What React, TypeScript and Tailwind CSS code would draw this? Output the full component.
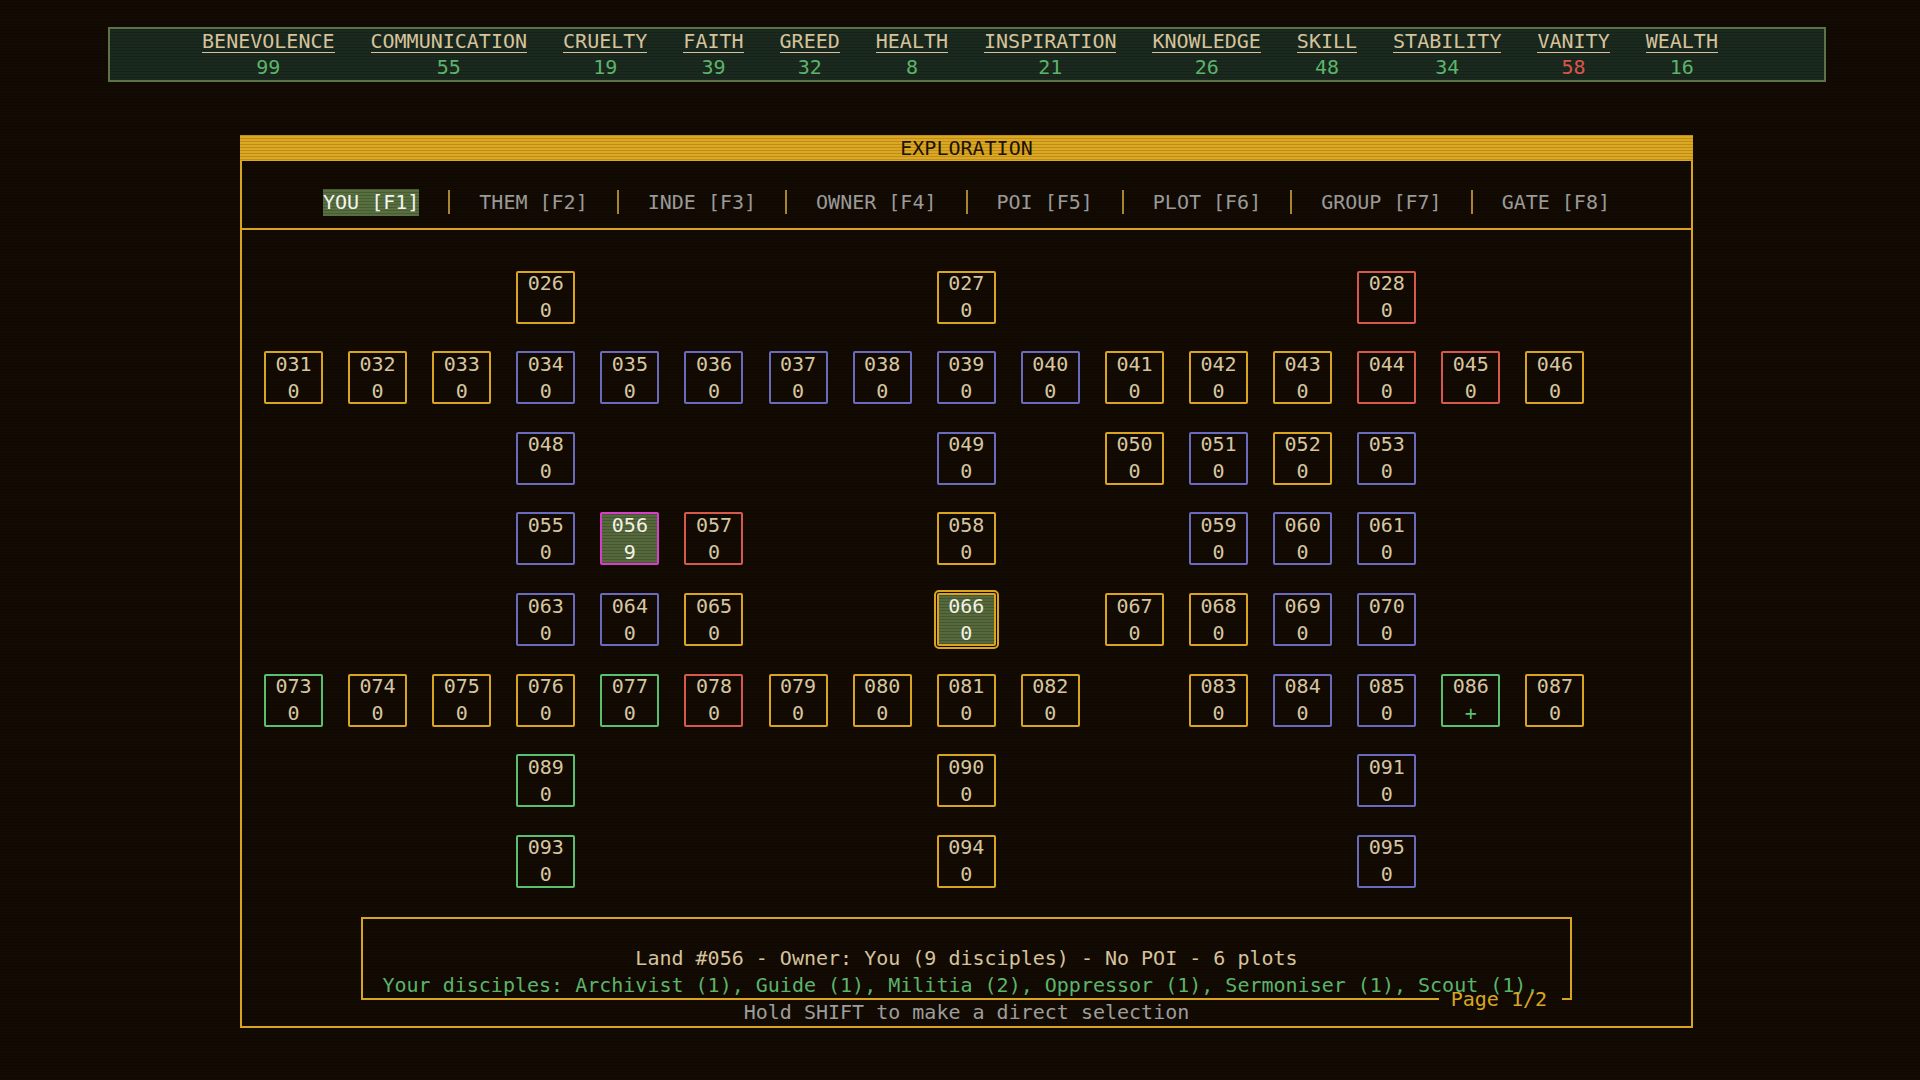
import React from 'react';

type Tone = 'y' | 'b' | 'r' | 'g' | 'm';

type Tile = {
  id: string;
  tone: Tone;
  value?: string;
  filled?: boolean;
  focus?: boolean;
};

const MONO = "font-['DejaVu_Sans_Mono','Liberation_Mono',monospace]";
const SCAN =
  'bg-[repeating-linear-gradient(to_bottom,rgba(0,0,0,0.18)_0px,rgba(0,0,0,0.18)_1px,transparent_1px,transparent_3px)]';

const stats: { name: string; value: number; low?: boolean }[] = [
  { name: 'BENEVOLENCE', value: 99 },
  { name: 'COMMUNICATION', value: 55 },
  { name: 'CRUELTY', value: 19 },
  { name: 'FAITH', value: 39 },
  { name: 'GREED', value: 32 },
  { name: 'HEALTH', value: 8 },
  { name: 'INSPIRATION', value: 21 },
  { name: 'KNOWLEDGE', value: 26 },
  { name: 'SKILL', value: 48 },
  { name: 'STABILITY', value: 34 },
  { name: 'VANITY', value: 58, low: true },
  { name: 'WEALTH', value: 16 },
];

const tabs = ['YOU [F1]', 'THEM [F2]', 'INDE [F3]', 'OWNER [F4]', 'POI [F5]', 'PLOT [F6]', 'GROUP [F7]', 'GATE [F8]'];

const toneBorder: Record<Tone, string> = {
  y: 'border-[#d9a521]',
  b: 'border-[#6b6bbd]',
  r: 'border-[#d65a4c]',
  g: 'border-[#5cbf6e]',
  m: 'border-[#d63fc9]',
};

// 17 columns per row, the map is centred on land 066
const COLS = 17;
const map: Record<number, Tile>[] = [
  { 3: { id: '026', tone: 'y' }, 8: { id: '027', tone: 'y' }, 13: { id: '028', tone: 'r' } },
  {
    0: { id: '031', tone: 'y' },
    1: { id: '032', tone: 'y' },
    2: { id: '033', tone: 'y' },
    3: { id: '034', tone: 'b' },
    4: { id: '035', tone: 'b' },
    5: { id: '036', tone: 'b' },
    6: { id: '037', tone: 'b' },
    7: { id: '038', tone: 'b' },
    8: { id: '039', tone: 'b' },
    9: { id: '040', tone: 'b' },
    10: { id: '041', tone: 'y' },
    11: { id: '042', tone: 'y' },
    12: { id: '043', tone: 'y' },
    13: { id: '044', tone: 'r' },
    14: { id: '045', tone: 'r' },
    15: { id: '046', tone: 'y' },
  },
  {
    3: { id: '048', tone: 'b' },
    8: { id: '049', tone: 'b' },
    10: { id: '050', tone: 'y' },
    11: { id: '051', tone: 'b' },
    12: { id: '052', tone: 'y' },
    13: { id: '053', tone: 'b' },
  },
  {
    3: { id: '055', tone: 'b' },
    4: { id: '056', tone: 'm', value: '9', filled: true },
    5: { id: '057', tone: 'r' },
    8: { id: '058', tone: 'y' },
    11: { id: '059', tone: 'b' },
    12: { id: '060', tone: 'b' },
    13: { id: '061', tone: 'b' },
  },
  {
    3: { id: '063', tone: 'b' },
    4: { id: '064', tone: 'b' },
    5: { id: '065', tone: 'y' },
    8: { id: '066', tone: 'y', filled: true, focus: true },
    10: { id: '067', tone: 'y' },
    11: { id: '068', tone: 'y' },
    12: { id: '069', tone: 'b' },
    13: { id: '070', tone: 'b' },
  },
  {
    0: { id: '073', tone: 'g' },
    1: { id: '074', tone: 'y' },
    2: { id: '075', tone: 'y' },
    3: { id: '076', tone: 'y' },
    4: { id: '077', tone: 'g' },
    5: { id: '078', tone: 'r' },
    6: { id: '079', tone: 'y' },
    7: { id: '080', tone: 'y' },
    8: { id: '081', tone: 'y' },
    9: { id: '082', tone: 'y' },
    11: { id: '083', tone: 'y' },
    12: { id: '084', tone: 'b' },
    13: { id: '085', tone: 'b' },
    14: { id: '086', tone: 'g', value: '+' },
    15: { id: '087', tone: 'y' },
  },
  { 3: { id: '089', tone: 'g' }, 8: { id: '090', tone: 'y' }, 13: { id: '091', tone: 'b' } },
  { 3: { id: '093', tone: 'g' }, 8: { id: '094', tone: 'y' }, 13: { id: '095', tone: 'b' } },
];

function LandTile({ tile }: { tile: Tile }) {
  const text = tile.filled ? 'text-[#f4f1e6]' : 'text-[#d6c6a0]';
  return (
    <div
      className={`flex h-[53px] w-[59px] flex-col items-center justify-center rounded-[2px] border-2 text-[20px] leading-[27px] ${toneBorder[tile.tone]} ${
        tile.filled ? `bg-[#55693c] ${SCAN}` : ''
      } ${tile.focus ? 'outline-2 outline-offset-[1px] outline-[#d9a521]' : ''}`}
    >
      <span className={text}>{tile.id}</span>
      <span className={tile.value === '+' ? 'text-[#5cbf6e]' : text}>{tile.value ?? '0'}</span>
    </div>
  );
}

export default function App() {
  return (
    <div
      className={`h-[1080px] w-full overflow-hidden bg-[#130b03] ${MONO} bg-[repeating-linear-gradient(to_bottom,rgba(0,0,0,0.22)_0px,rgba(0,0,0,0.22)_1px,transparent_1px,transparent_3px)]`}
    >
      {/* attribute bar */}
      <div
        className={`ml-[108px] mr-[94px] mt-[27px] h-[55px] border-2 border-[#5b7347] bg-[#1b2a1f] ${SCAN}`}
      >
        <div className="flex justify-center gap-[36px] pr-[14px] pt-[1px]">
          {stats.map((s) => (
            <div key={s.name} className="flex flex-col items-center">
              <span className="border-b border-[#d6c39c] text-[20px] leading-[22px] text-[#d6c39c]">{s.name}</span>
              <span
                className={`mt-[3px] text-[20px] leading-[22px] ${s.low ? 'text-[#d9564a]' : 'text-[#5cb46a]'}`}
              >
                {s.value}
              </span>
            </div>
          ))}
        </div>
      </div>

      {/* exploration window */}
      <div className="ml-[240px] mt-[53px] w-[1453px]">
        <div
          className={`flex h-[26px] items-center justify-center bg-[#dba823] text-[20px] leading-[26px] text-[#1c1206] bg-[repeating-linear-gradient(to_bottom,rgba(140,90,0,0.35)_0px,rgba(140,90,0,0.35)_1px,transparent_1px,transparent_3px)]`}
        >
          EXPLORATION
        </div>
        <div className="flex h-[867px] flex-col border-x-2 border-b-2 border-[#d9a521]">
          {/* filter tabs */}
          <div className="flex h-[69px] items-end justify-center border-b-2 border-[#d9a521] pb-[12px]">
            {tabs.map((t, i) => (
              <React.Fragment key={t}>
                {i > 0 && <span className="mx-[29px] mb-[2px] h-[24px] w-[2px] bg-[#a9852f]" />}
                <span
                  className={`text-[20px] leading-[27px] ${
                    i === 0 ? `bg-[#58703f] text-[#f4f4f0] ${SCAN}` : 'text-[#9a9a98]'
                  }`}
                >
                  {t}
                </span>
              </React.Fragment>
            ))}
          </div>

          {/* land map */}
          <div className="flex flex-col gap-y-[27.6px] pl-[22px] pt-[40.7px]">
            {map.map((row, r) => (
              <div key={r} className="flex gap-x-[25.1px]">
                {Array.from({ length: COLS }, (_, c) =>
                  row[c] ? <LandTile key={c} tile={row[c]} /> : <div key={c} className="h-[53px] w-[59px]" />
                )}
              </div>
            ))}
          </div>

          {/* land details */}
          <div className="relative mx-auto mt-[29px] flex h-[82px] w-[1211px] flex-col items-center justify-end border-x-2 border-t-2 border-[#d9a521]">
            <p className="text-[20px] leading-[27px] text-[#d6c39c]">
              Land #056 - Owner: You (9 disciples) - No POI - 6 plots
            </p>
            <p className="whitespace-pre text-[20px] leading-[27px] text-[#5cb46a]">
              {'Your disciples: Archivist (1), Guide (1), Militia (2), Oppressor (1), Sermoniser (1), Scout (1), '}
            </p>
            <div className="absolute bottom-[-1px] left-[-2px] right-[-2px] flex h-[2px] items-center">
              <div className="h-[2px] flex-1 bg-[#d9a521]" />
              <span className="pl-[12px] pr-[15px] text-[20px] leading-none text-[#d9a521]">Page 1/2</span>
              <div className="h-[2px] w-[10px] bg-[#d9a521]" />
            </div>
          </div>
          <p className="text-center text-[20px] leading-[26px] text-[#9d9d9b]">Hold SHIFT to make a direct selection</p>
        </div>
      </div>
    </div>
  );
}
